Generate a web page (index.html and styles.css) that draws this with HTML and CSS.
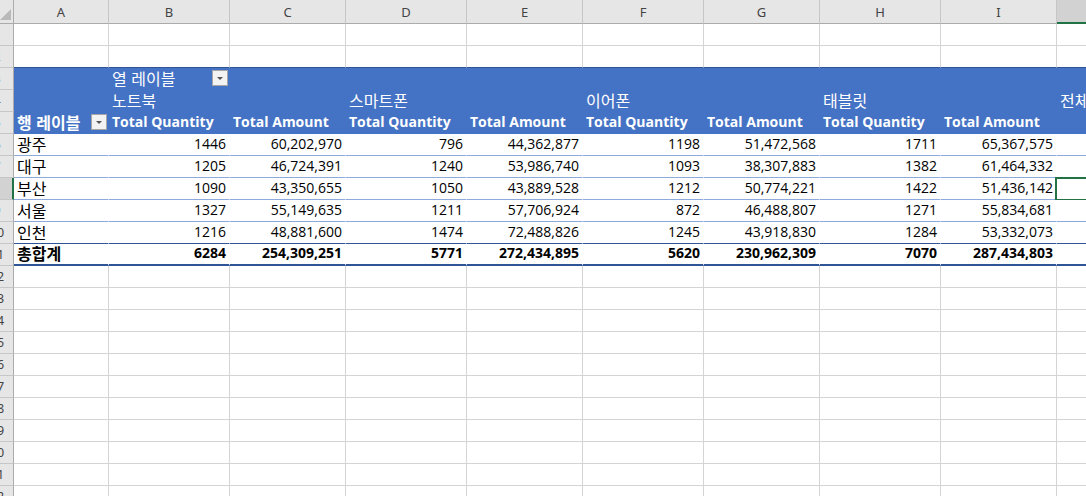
FILE: index.html
```html
<!DOCTYPE html>
<html lang="ko">
<head>
<meta charset="utf-8">
<title>피벗 테이블</title>
<link rel="stylesheet" href="styles.css">
</head>
<body>
<div class="sheet">
  <div class="row head">
    <div class="corner"><span class="tri"></span></div>
    <div class="ch">A</div><div class="ch">B</div><div class="ch">C</div><div class="ch">D</div><div class="ch">E</div>
    <div class="ch">F</div><div class="ch">G</div><div class="ch">H</div><div class="ch">I</div><div class="ch sel">J</div>
  </div>
  <div class="row"><div class="rh">1</div><div></div><div></div><div></div><div></div><div></div><div></div><div></div><div></div><div></div><div></div></div>
  <div class="row before"><div class="rh">2</div><div></div><div></div><div></div><div></div><div></div><div></div><div></div><div></div><div></div><div></div></div>

  <div class="row ph top">
    <div class="rh">3</div>
    <div></div>
    <div class="lbl"><span class="k">열 레이블</span><span class="dd dd-col"><i></i></span></div>
    <div></div><div></div><div></div><div></div><div></div><div></div><div></div><div></div>
  </div>
  <div class="row ph">
    <div class="rh">4</div>
    <div></div>
    <div><span class="k">노트북</span></div><div></div>
    <div><span class="k">스마트폰</span></div><div></div>
    <div><span class="k">이어폰</span></div><div></div>
    <div><span class="k">태블릿</span></div><div></div>
    <div><span class="k">전체</span>&nbsp;Total Quantity</div>
  </div>
  <div class="row ph bold">
    <div class="rh">5</div>
    <div class="lbl"><span class="k">행 레이블</span><span class="dd dd-row"><i></i></span></div>
    <div>Total Quantity</div><div>Total Amount</div>
    <div>Total Quantity</div><div>Total Amount</div>
    <div>Total Quantity</div><div>Total Amount</div>
    <div>Total Quantity</div><div>Total Amount</div>
    <div></div>
  </div>

  <div class="row pd">
    <div class="rh">6</div><div><span class="k">광주</span></div>
    <div class="n">1446</div><div class="n">60,202,970</div>
    <div class="n">796</div><div class="n">44,362,877</div>
    <div class="n">1198</div><div class="n">51,472,568</div>
    <div class="n">1711</div><div class="n">65,367,575</div><div></div>
  </div>
  <div class="row pd">
    <div class="rh">7</div><div><span class="k">대구</span></div>
    <div class="n">1205</div><div class="n">46,724,391</div>
    <div class="n">1240</div><div class="n">53,986,740</div>
    <div class="n">1093</div><div class="n">38,307,883</div>
    <div class="n">1382</div><div class="n">61,464,332</div><div></div>
  </div>
  <div class="row pd">
    <div class="rh rsel">8</div><div><span class="k">부산</span></div>
    <div class="n">1090</div><div class="n">43,350,655</div>
    <div class="n">1050</div><div class="n">43,889,528</div>
    <div class="n">1212</div><div class="n">50,774,221</div>
    <div class="n">1422</div><div class="n">51,436,142</div><div class="active"><span class="cursor"></span></div>
  </div>
  <div class="row pd">
    <div class="rh">9</div><div><span class="k">서울</span></div>
    <div class="n">1327</div><div class="n">55,149,635</div>
    <div class="n">1211</div><div class="n">57,706,924</div>
    <div class="n">872</div><div class="n">46,488,807</div>
    <div class="n">1271</div><div class="n">55,834,681</div><div></div>
  </div>
  <div class="row pd last">
    <div class="rh">10</div><div><span class="k">인천</span></div>
    <div class="n">1216</div><div class="n">48,881,600</div>
    <div class="n">1474</div><div class="n">72,488,826</div>
    <div class="n">1245</div><div class="n">43,918,830</div>
    <div class="n">1284</div><div class="n">53,332,073</div><div></div>
  </div>
  <div class="row pt">
    <div class="rh">11</div><div><span class="k">총합계</span></div>
    <div class="n">6284</div><div class="n">254,309,251</div>
    <div class="n">5771</div><div class="n">272,434,895</div>
    <div class="n">5620</div><div class="n">230,962,309</div>
    <div class="n">7070</div><div class="n">287,434,803</div><div></div>
  </div>

  <div class="row"><div class="rh">12</div><div></div><div></div><div></div><div></div><div></div><div></div><div></div><div></div><div></div><div></div></div>
  <div class="row"><div class="rh">13</div><div></div><div></div><div></div><div></div><div></div><div></div><div></div><div></div><div></div><div></div></div>
  <div class="row"><div class="rh">14</div><div></div><div></div><div></div><div></div><div></div><div></div><div></div><div></div><div></div><div></div></div>
  <div class="row"><div class="rh">15</div><div></div><div></div><div></div><div></div><div></div><div></div><div></div><div></div><div></div><div></div></div>
  <div class="row"><div class="rh">16</div><div></div><div></div><div></div><div></div><div></div><div></div><div></div><div></div><div></div><div></div></div>
  <div class="row"><div class="rh">17</div><div></div><div></div><div></div><div></div><div></div><div></div><div></div><div></div><div></div><div></div></div>
  <div class="row"><div class="rh">18</div><div></div><div></div><div></div><div></div><div></div><div></div><div></div><div></div><div></div><div></div></div>
  <div class="row"><div class="rh">19</div><div></div><div></div><div></div><div></div><div></div><div></div><div></div><div></div><div></div><div></div></div>
  <div class="row"><div class="rh">20</div><div></div><div></div><div></div><div></div><div></div><div></div><div></div><div></div><div></div><div></div></div>
  <div class="row"><div class="rh">21</div><div></div><div></div><div></div><div></div><div></div><div></div><div></div><div></div><div></div><div></div></div>
  <div class="row"><div class="rh">22</div><div></div><div></div><div></div><div></div><div></div><div></div><div></div><div></div><div></div><div></div></div>
</div>
</body>
</html>
```

FILE: styles.css
```css
html, body {
  margin: 0;
  padding: 0;
  overflow: hidden;
  background: #ffffff;
}
body {
  width: 1086px;
  height: 496px;
  font-family: "Open Sans", "Noto Sans CJK KR", sans-serif;
  font-size: 14px;
  color: #000;
}
.sheet {
  margin-left: -19px;
  width: 1230px;
}
.row {
  display: grid;
  grid-template-columns: 33px 95px 121px 116px 121px 116px 121px 116px 121px 116px 174px;
  height: 22px;
}
.row.head { height: 24px; }
.row > div {
  box-sizing: border-box;
  border-right: 1px solid #d4d4d4;
  border-bottom: 1px solid #d4d4d4;
  white-space: nowrap;
  display: flex;
  align-items: flex-end;
  padding: 0 3px 2px 3px;
  position: relative;
  line-height: 18px;
}
.k {
  font-family: "Noto Sans CJK KR", sans-serif;
  font-size: 16px;
}

/* headers */
.row > .corner {
  background: #e6e6e6;
  border-right-color: #ababab;
  border-bottom-color: #ababab;
  padding: 0;
}
.tri {
  position: absolute;
  right: 2px;
  bottom: 3px;
  width: 0;
  height: 0;
  border-left: 11px solid transparent;
  border-bottom: 11px solid #b9b9b9;
}
.row > .ch {
  background: #e6e6e6;
  border-right-color: #c6c6c6;
  border-bottom-color: #ababab;
  justify-content: center;
  align-items: center;
  padding: 0;
  font-family: "Noto Sans", sans-serif;
  font-size: 13px;
  color: #444;
}
.row > .ch.sel {
  background: #d2d2d2;
  border-bottom: 2px solid #217346;
  color: #217346;
}
.row > .rh {
  background: #e6e6e6;
  border-right-color: #ababab;
  border-bottom-color: #c6c6c6;
  justify-content: center;
  align-items: center;
  padding: 0;
  font-family: "Noto Sans", sans-serif;
  font-size: 12.5px;
  color: #444;
}
.row > .rh.rsel {
  background: #d2d2d2;
  border-right: 2px solid #217346;
  color: #217346;
}

/* pivot header */
.row.before > div:not(.rh) { border-bottom-color: #2f5597; }
.row.ph > div:not(.rh) {
  background: #4472c4;
  border-color: #4472c4;
  color: #fff;
}
.row.bold > div:not(.rh) { font-weight: 700; }
.lbl { justify-content: flex-start; }
.dd {
  position: absolute;
  right: 1px;
  bottom: 3px;
  width: 16px;
  height: 16px;
  box-sizing: border-box;
  background: #f3f3f3;
  border: 1px solid #a6a6a6;
}
.dd i {
  position: absolute;
  left: 4px;
  top: 6px;
  width: 0;
  height: 0;
  border-left: 3px solid transparent;
  border-right: 3px solid transparent;
  border-top: 3px solid #555;
}

/* pivot data */
.row.pd > div:not(.rh),
.row.pt > div:not(.rh) {
  background: #fff;
  border-right-color: #fff;
  border-bottom-color: #8ea9db;
}
.row.pd.last > div:not(.rh) { border-bottom-color: #2f5597; }
.row.pt > div:not(.rh) {
  font-weight: 700;
  border-bottom: 2px solid #2f5597;
}
.row > .n { justify-content: flex-end; }

.row > .active { border-right-color: #d4d4d4; }
.cursor {
  position: absolute;
  left: -2px;
  top: -1px;
  width: 60px;
  height: 24px;
  box-sizing: border-box;
  border: 2px solid #217346;
}
```
